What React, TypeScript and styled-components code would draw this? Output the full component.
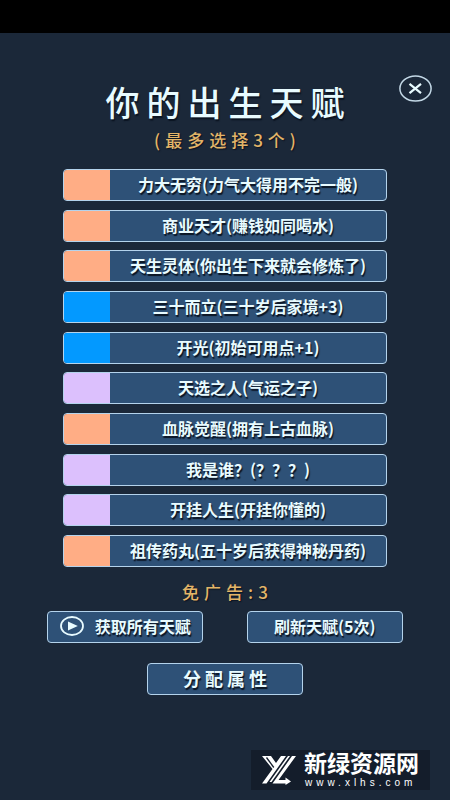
import React, { useState } from "react";
import styled, { createGlobalStyle } from "styled-components";

const GlobalStyle = createGlobalStyle`
  *, *::before, *::after { box-sizing: border-box; }
  body {
    margin: 0;
    background: #1b2839;
    font-family: "Noto Sans CJK SC", sans-serif;
  }
  button { font-family: inherit; cursor: pointer; }
`;

const colors = {
  panel: "#2e5177",
  line: "#b4d3ec",
  text: "#e8fbff",
  gold: "#e3b568",
  shadow: "#0b1422",
};

const Page = styled.div`
  min-height: 100vh;
  display: flex;
  flex-direction: column;
  background: #1b2839;
  color: ${colors.text};
`;

const StatusBar = styled.div`
  height: 33px;
  background: #000;
`;

const Main = styled.main`
  flex: 1;
  display: flex;
  flex-direction: column;
  align-items: center;
`;

const Header = styled.header`
  width: 100%;
  padding: 42px 18px 0;
  display: grid;
  grid-template-columns: 1fr auto 1fr;
  align-items: start;
`;

const Title = styled.h1`
  grid-column: 2;
  margin: 3px 0 0;
  padding-left: 7px;
  font-size: 34px;
  line-height: 48px;
  font-weight: 500;
  letter-spacing: 7px;
  text-shadow: 1px 2px 1px ${colors.shadow};
`;

const CloseButton = styled.button`
  justify-self: end;
  width: 33px;
  height: 27px;
  padding: 0;
  display: grid;
  place-items: center;
  border: 0;
  background: none;
  color: ${colors.text};
`;

const Note = styled.p`
  margin: 0;
  padding-left: 5px;
  font-size: 17px;
  line-height: 26px;
  font-weight: 500;
  letter-spacing: 5px;
  color: ${colors.gold};
  text-shadow: 1px 1px 1px ${colors.shadow};
`;

const Hint = styled(Note)`
  margin: 1px 0 16px;
`;

const Quota = styled(Note)`
  margin: 12px 0 6px;
`;

const TalentList = styled.ul`
  width: 72%;
  min-height: 398px;
  margin: 0;
  padding: 0;
  list-style: none;
  display: grid;
  align-content: space-between;
`;

const TalentButton = styled.button`
  width: 100%;
  height: 32px;
  padding: 0;
  display: flex;
  align-items: stretch;
  overflow: hidden;
  border: 1px solid ${colors.line};
  border-radius: 4px;
  background: ${colors.panel};
  color: inherit;
`;

const Swatch = styled.span<{ $color: string }>`
  width: 46px;
  background: ${(p) => p.$color};
`;

const Label = styled.span`
  flex: 1;
  font-size: 16px;
  line-height: 28px;
  font-weight: 700;
  white-space: nowrap;
  text-align: center;
  text-shadow: 1px 2px 1px ${colors.shadow};
`;

const Actions = styled.div`
  width: 79%;
  margin-bottom: 20px;
  display: flex;
  justify-content: space-between;
`;

const ActionButton = styled.button`
  width: 156px;
  height: 32px;
  padding: 0 11px 2px;
  display: flex;
  align-items: center;
  justify-content: center;
  gap: 11px;
  border: 1px solid ${colors.line};
  border-radius: 4px;
  background: ${colors.panel};
  color: inherit;
  font-size: 16px;
  line-height: 28px;
  font-weight: 700;
  white-space: nowrap;
  text-shadow: 1px 2px 1px ${colors.shadow};
`;

const ConfirmButton = styled(ActionButton)`
  padding: 0 11px 2px 15px;
  font-size: 18px;
  letter-spacing: 4px;
`;

const Brand = styled.footer`
  align-self: flex-end;
  height: 40px;
  margin: 0 20px 10px 0;
  padding: 0 11px;
  display: flex;
  align-items: center;
  gap: 8px;
  background: #141d2b;
  color: #fff;
`;

const BrandText = styled.div`
  display: flex;
  flex-direction: column;
  gap: 6px;
`;

const BrandName = styled.span`
  font-size: 23px;
  line-height: 20px;
  font-weight: 700;
`;

const BrandSite = styled.span`
  padding-left: 1px;
  font-family: "Liberation Sans", sans-serif;
  font-size: 10px;
  line-height: 10px;
  letter-spacing: 4px;
`;

const orange = "#ffad85";
const blue = "#0399ff";
const violet = "#dcc0fd";

const talents = [
  { color: orange, text: "力大无穷(力气大得用不完一般)" },
  { color: orange, text: "商业天才(赚钱如同喝水)" },
  { color: orange, text: "天生灵体(你出生下来就会修炼了)" },
  { color: blue, text: "三十而立(三十岁后家境+3)" },
  { color: blue, text: "开光(初始可用点+1)" },
  { color: violet, text: "天选之人(气运之子)" },
  { color: orange, text: "血脉觉醒(拥有上古血脉)" },
  { color: violet, text: "我是谁？(？？？)" },
  { color: violet, text: "开挂人生(开挂你懂的)" },
  { color: orange, text: "祖传药丸(五十岁后获得神秘丹药)" },
];

const CloseIcon = () => (
  <svg width="33" height="27" viewBox="0 0 33 27" fill="none" stroke="currentColor" aria-hidden="true">
    <ellipse cx="16.5" cy="13.5" rx="15.6" ry="12.6" strokeWidth="1.5" stroke="#c3d8e6" />
    <path d="M10.5 8.8 22 18.2M22 8.8 10.5 18.2" strokeWidth="2.2" />
  </svg>
);

const PlayIcon = () => (
  <svg width="24" height="20" viewBox="0 0 24 20" fill="none" aria-hidden="true">
    <ellipse cx="12" cy="10" rx="11" ry="9" stroke="currentColor" strokeWidth="1.8" />
    <path d="M8 5.5 17.8 10 8 14.5Z" fill="currentColor" />
  </svg>
);

const BrandMark = () => (
  <svg width="34" height="30" viewBox="0 0 34 30" fill="currentColor" aria-hidden="true">
    <path d="M0 1H9L14 8 19 1H24L4.5 28.5H0L10.5 14Z" />
    <path d="M4.5 2.5 11.8 12.5" stroke="#141d2b" strokeWidth="1.3" />
    <path d="M26 1H28L9.5 27H7.5Z" />
    <path d="M30 1H34L16.5 25H23.5V22.5L29 26.5 23.5 30V28.5H10.5Z" />
  </svg>
);

export default function App() {
  const [chosen, setChosen] = useState<number[]>([]);

  const toggle = (index: number) =>
    setChosen((list) =>
      list.includes(index)
        ? list.filter((i) => i !== index)
        : list.length < 3
          ? [...list, index]
          : list,
    );

  return (
    <>
      <GlobalStyle />
      <Page>
        <StatusBar />
        <Main>
          <Header>
            <Title>你的出生天赋</Title>
            <CloseButton aria-label="关闭">
              <CloseIcon />
            </CloseButton>
          </Header>
          <Hint>(最多选择3个)</Hint>
          <TalentList>
            {talents.map((talent, index) => (
              <li key={talent.text}>
                <TalentButton aria-pressed={chosen.includes(index)} onClick={() => toggle(index)}>
                  <Swatch $color={talent.color} />
                  <Label>{talent.text}</Label>
                </TalentButton>
              </li>
            ))}
          </TalentList>
          <Quota>免广告:3</Quota>
          <Actions>
            <ActionButton>
              <PlayIcon />
              获取所有天赋
            </ActionButton>
            <ActionButton>刷新天赋(5次)</ActionButton>
          </Actions>
          <ConfirmButton>分配属性</ConfirmButton>
        </Main>
        <Brand>
          <BrandMark />
          <BrandText>
            <BrandName>新绿资源网</BrandName>
            <BrandSite>www.xlhs.com</BrandSite>
          </BrandText>
        </Brand>
      </Page>
    </>
  );
}
